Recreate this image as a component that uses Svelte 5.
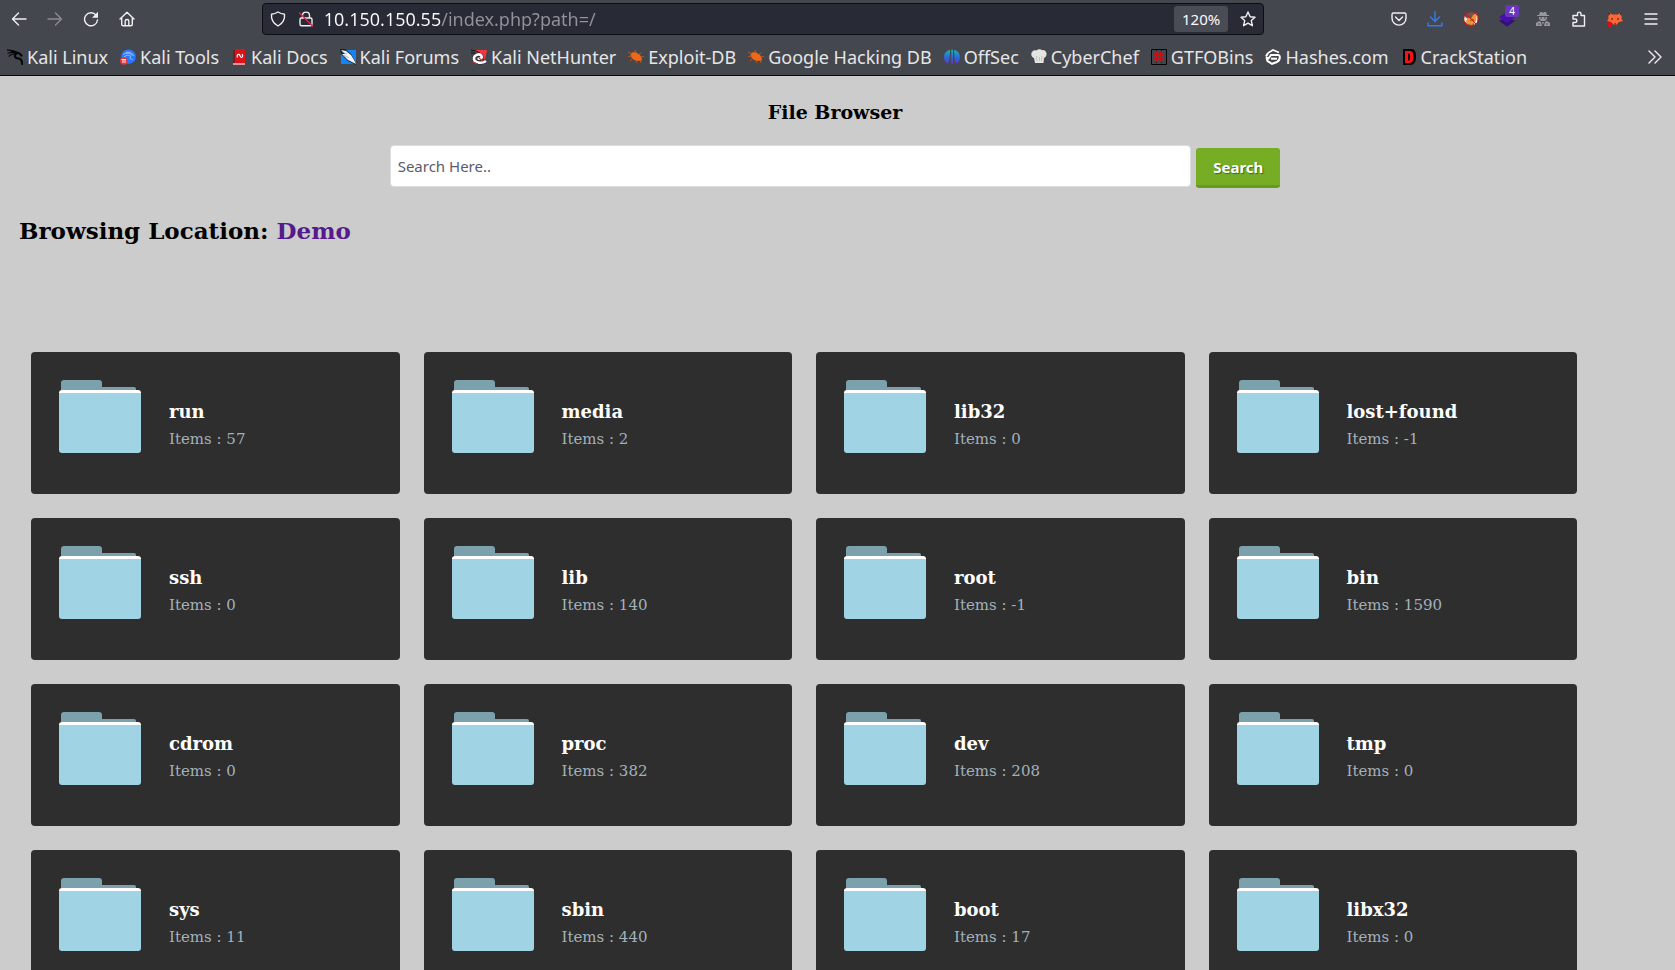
<script>
  const bookmarks = [
    { icon: 'dragon', label: 'Kali Linux' },
    { icon: 'tools', label: 'Kali Tools' },
    { icon: 'docs', label: 'Kali Docs' },
    { icon: 'forums', label: 'Kali Forums' },
    { icon: 'nethunter', label: 'Kali NetHunter' },
    { icon: 'bug', label: 'Exploit-DB' },
    { icon: 'bug', label: 'Google Hacking DB' },
    { icon: 'offsec', label: 'OffSec' },
    { icon: 'chef', label: 'CyberChef' },
    { icon: 'gtfo', label: 'GTFOBins' },
    { icon: 'hashes', label: 'Hashes.com' },
    { icon: 'crack', label: 'CrackStation' }
  ];

  const folders = [
    { name: 'run', items: 57 },
    { name: 'media', items: 2 },
    { name: 'lib32', items: 0 },
    { name: 'lost+found', items: -1 },
    { name: 'ssh', items: 0 },
    { name: 'lib', items: 140 },
    { name: 'root', items: -1 },
    { name: 'bin', items: 1590 },
    { name: 'cdrom', items: 0 },
    { name: 'proc', items: 382 },
    { name: 'dev', items: 208 },
    { name: 'tmp', items: 0 },
    { name: 'sys', items: 11 },
    { name: 'sbin', items: 440 },
    { name: 'boot', items: 17 },
    { name: 'libx32', items: 0 }
  ];

  let url = $state('10.150.150.55/index.php?path=/');
  let query = $state('');
</script>

{#snippet favicon(name)}
  <svg class="favicon" viewBox="0 0 16 16" aria-hidden="true">
    {#if name === 'dragon'}
      <g fill="none" stroke="#050608" stroke-linecap="round">
        <path d="M.5 1.2C4 .8 7 2 9.500 4.200M1 4.200C4 3 7 3.200 9.500 4.400M2 7.200C4 5.200 7 4.600 9.500 5" stroke-width="1.200" />
        <path d="M5 2.200C8 2.500 9.500 4 12.500 4.500L14.500 6.500M9 4.500C6.500 7.500 8.500 9.500 12 9.500C14.500 10 15 12 15.300 15" stroke-width="2.200" />
      </g>
    {:else if name === 'tools'}
      <circle cx="8.500" cy="7.700" r="7.300" fill="#2777ff" />
      <path d="M3 5.500C7 3 10 4.500 12.500 6.500M4 8C7 5.500 9 6 11 7.500C9 8.500 10 10 12.500 10.500M6 3.500C10 2.500 13 5 14 7" fill="none" stroke="#a9caff" stroke-width=".9" />
      <circle cx="3.700" cy="12" r="3.700" fill="#e9363c" />
      <path d="M1.500 10.500H6M3 10.500V14M5 10.500V14" stroke="#fff" stroke-width=".9" />
    {:else if name === 'docs'}
      <path d="M2 1.500L4 0H14V14H2Z" fill="#df1118" />
      <path d="M2 1.500L4 0V14H2Z" fill="#7d1720" />
      <path d="M2 14H14V16H2Z" fill="#dadada" />
      <path d="M2 15H14" stroke="#d11b25" stroke-width=".7" />
      <path d="M6.500 8.500C5.500 6 7 4.800 8.300 5.500C9.500 6.500 9 8.500 10.500 8.500C12 8 11.800 6 11 5" fill="none" stroke="#fff" stroke-width="1.200" />
    {:else if name === 'forums'}
      <path d="M1 1H16V15H1Z" fill="#1683f5" />
      <path d="M0 0H5L11 5L16 14V16L8 12L1 5Z" fill="#17202a" />
      <path d="M1 1L6 2L11 6L14 11L16 15L12 13L8 11L5 8L2 5L5 5Z" fill="#f4f7fb" />
      <path d="M2 3L7 5M4 6L9 9" stroke="#8f99a5" stroke-width=".6" />
    {:else if name === 'nethunter'}
      <path d="M3 1H16L14 11Z" fill="#f33642" />
      <path d="M0 1L5 2L9 4M0 4L4 4" stroke="#111" stroke-width="1" />
      <path d="M15 12C11 15 3.500 14 3 10C2.500 5.500 9 4 10.500 7C11.500 9.500 8 10.500 7 9" fill="none" stroke="#24252a" stroke-width="3.600" />
      <path d="M15 12C11 15 3.500 14 3 10C2.500 5.500 9 4 10.500 7C11.500 9.500 8 10.500 7 9" fill="none" stroke="#fff" stroke-width="2.600" />
      <path d="M2 13L7 15M8 9L12 12" stroke="#d82d3b" stroke-width="1.200" />
    {:else if name === 'bug'}
      <path d="M3 4C6 2 11.500 4.500 13.500 8.500L14 11.500L10 12C6.500 12 3 9 2.500 6.500Z" fill="#f06815" />
      <path d="M4 5L0 3M4 7L0 7.500M5 9L2 12M8 4L7 1M11 6L13 3.500M9 11L8 14M12 11L13 14M13 8L16 7.500" stroke="#b4592a" stroke-width="1" />
    {:else if name === 'offsec'}
      <defs>
        <linearGradient id="offsec-fill" x2="0" y2="1">
          <stop stop-color="#1ab5bd" />
          <stop offset=".55" stop-color="#2868d8" />
          <stop offset="1" stop-color="#6932d2" />
        </linearGradient>
      </defs>
      <path d="M6 1C-1 2-2 12 4 14.500C6 11 6 5 6 1Z M7.300 .8H9V15H7.300Z M10.200 1C17 2 18 12 12 14.500C10 11 10.200 5 10.200 1Z" fill="url(#offsec-fill)" />
    {:else if name === 'chef'}
      <path d="M3 9C0 8-.5 4 1.500 2.500C3 1 5 1.300 5.500 1.500C7 0 10 0 11 1.200C13 .5 16 2.500 15.500 5.500C15.500 7.500 14 8.500 13 9L12.500 14H4Z" fill="#e4e4e1" />
      <path d="M5.500 7L6 12M8.500 8V12M11 7L10.500 12" stroke="#b9b9b7" stroke-width=".8" />
    {:else if name === 'gtfo'}
      <path d="M.5 .5H15.500V15.500H.5Z" fill="#45464c" stroke="#050505" />
      <path d="M5.500 1V15M10.500 1V15" stroke="#111" stroke-dasharray="1 1" />
      <path d="M6 3V13M10 3V13M3 6H13M3 10H13" stroke="#c90d12" stroke-width="2" />
    {:else if name === 'hashes'}
      <path d="M3 4L8 1L14 3.500" fill="none" stroke="#fff" stroke-width="1.600" />
      <path d="M1 7.500L3 4M1 8L3.500 9.500L6 6H12C16 5 15.500 11 12 13L7 14.800L2.500 12L1.500 9" fill="none" stroke="#fff" stroke-width="2" />
      <path d="M6 9.700H12" stroke="#fff" stroke-width="2" />
    {:else if name === 'crack'}
      <path d="M2 0H10C14 0 15 3 15 8C15 13 13 16 9 16H2Z" fill="#050505" />
      <path fill-rule="evenodd" d="M4 2H8.500C11.500 2 12.500 4 12.500 8C12.500 12 11 14 8 14H4ZM7 4.500V11.500H8C9.500 11.500 9.500 4.500 8 4.500Z" fill="#fb1017" />
    {/if}
  </svg>
{/snippet}

<div class="browser">
  <header class="chrome">
    <div class="toolbar">
      <nav class="tools" aria-label="Navigation">
        <button aria-label="Back">
          <svg viewBox="0 0 16 16"><path d="M15 8H1.500M7.500 2L1.500 8L7.500 14" /></svg>
        </button>
        <button class="dim" aria-label="Forward">
          <svg viewBox="0 0 16 16"><path d="M1 8H14.500M8.500 2L14.500 8L8.500 14" /></svg>
        </button>
        <button aria-label="Reload">
          <svg viewBox="0 0 16 16"><path d="M13.200 4.300A6.500 6.500 0 1 0 14.500 9" /><path class="solid" d="M15 .8V6.700H9Z" /></svg>
        </button>
        <button aria-label="Home">
          <svg viewBox="0 0 16 16"><path d="M1 8L8 1.200L15 8M2.700 7V13.300Q2.700 14.800 4.200 14.800H11.800Q13.300 14.800 13.300 13.300V7M6.200 14.500V10Q6.200 8.500 8 8.500T9.800 10V14.500" /></svg>
        </button>
      </nav>

      <div class="address">
        <svg viewBox="0 0 16 16" aria-hidden="true"><path d="M8 1C10 2.300 12 3 14.500 3.200C15 8.500 12.500 12.500 8 15C3.500 12.500 1 8.500 1.500 3.200C4 3 6 2.300 8 1Z" /></svg>
        <svg class="lock" viewBox="0 0 16 16" aria-hidden="true">
          <path d="M4.500 7V4.500C4.500 0 11.500 0 11.500 4.500V7M3.500 7H12.500Q14 7 14 8.500V13Q14 14.800 12.500 14.800H3.500Q2 14.800 2 13V8.500Q2 7 3.500 7Z" />
          <path class="slash" d="M1.500 2L14.500 15" />
        </svg>
        <input aria-label="Address" bind:value={url} spellcheck="false" />
        <button class="zoom">120%</button>
        <button class="star" aria-label="Bookmark this page">
          <svg viewBox="0 0 16 16"><path d="M8 1L10.100 5.700L15 6.200L11.300 9.600L12.400 14.700L8 12.100L3.600 14.700L4.700 9.600L1 6.200L5.900 5.700Z" /></svg>
        </button>
      </div>

      <div class="tools">
        <button aria-label="Save to Pocket">
          <svg viewBox="0 0 16 16"><path d="M2.500 2H13.500Q15 2 15 3.500V7C15 16.500 1 16.500 1 7V3.500Q1 2 2.500 2ZM4.500 6L8 9.500L11.500 6" /></svg>
        </button>
        <button class="blue" aria-label="Downloads">
          <svg viewBox="0 0 16 16"><path d="M8 .5V10.500M3.500 6L8 10.500L12.500 6M1 12V14.800H15V12" /></svg>
        </button>
        <button aria-label="Proxy switcher">
          <svg class="art" viewBox="0 0 16 16">
            <circle cx="8" cy="8" r="7.200" fill="#655957" />
            <path d="M1 5L5 8L4 12L1 10ZM12 2L15 5L14 12L11 14Z" fill="#f0ede6" />
            <path d="M3 10L6 6L8 8L10 4L14 2.500L13 10L9 14L4 13Z" fill="#f4932b" />
            <path d="M7 10L10 8L11 10" fill="none" stroke="#a6501b" />
            <circle cx="8" cy="8" r="7.300" fill="none" stroke="#be151d" />
            <path d="M3 3L13 13" stroke="#be151d" />
          </svg>
        </button>
        <button aria-label="Wappalyzer">
          <svg class="art" viewBox="0 0 16 16">
            <path d="M0 10L8 6L16 10L8 15.500Z" fill="#321078" />
            <path d="M0 6L8 1L16 6L8 12Z" fill="#4710ad" />
          </svg>
          <span class="badge">4</span>
        </button>
        <button aria-label="User agent">
          <svg class="art" viewBox="0 0 16 16">
            <path d="M5 1H7L8 2L9 1H11L12 4H14V5H2V4H4ZM4 6H12V8L10 10H6L4 8ZM1 12L4 10L6 11L7 15H1ZM15 12L12 10L10 11L9 15H15ZM7 11H9L8 14Z" fill="#96979a" />
            <path d="M5 7H7M9 7H11M3 13H5M11 13H13" stroke="#4b4c52" />
          </svg>
        </button>
        <button aria-label="Extensions">
          <svg viewBox="0 0 16 16"><path d="M2 6V4.500H6.500V3C6.500 .5 10 .5 10 3V4.500H13.500V15H2V11.500H4C6.500 11.500 6.500 8 4 8H2Z" /></svg>
        </button>
        <button aria-label="FoxyProxy">
          <svg class="art" viewBox="0 0 16 16">
            <path d="M1 0L5 3.500H11L15 0L14.500 8L16 10L12 11L9 14H7L4 11L0 10L1.500 8Z" fill="#ff6637" />
            <path d="M1 0L1.500 5L3.500 2.500ZM15 0L14.500 5L12.500 2.500Z" fill="#33282a" />
            <path d="M5 7V9M11 7V9M7 13H9" stroke="#281d1d" />
            <circle cx="2.700" cy="13.500" r="2.500" fill="#ef050b" />
          </svg>
        </button>
        <button aria-label="Menu">
          <svg viewBox="0 0 16 16"><path d="M2 3H14M2 8H14M2 13H14" /></svg>
        </button>
      </div>
    </div>

    <nav class="bookmarks" aria-label="Bookmarks">
      {#each bookmarks as mark}
        <a href="#{mark.icon}">{@render favicon(mark.icon)}<span>{mark.label}</span></a>
      {/each}
      <button class="more" aria-label="More bookmarks">
        <svg viewBox="0 0 16 16"><path d="M2 2L8 8L2 14M8 2L14 8L8 14" /></svg>
      </button>
    </nav>
  </header>

  <main>
    <h3>File Browser</h3>
    <form onsubmit={(event) => event.preventDefault()}>
      <input class="query" type="text" aria-label="Search Here.." placeholder="Search Here.." bind:value={query} />
      <button class="submit">Search</button>
    </form>
    <h2>Browsing Location: <a href="#demo">Demo</a></h2>

    <section class="grid">
      {#each folders as folder}
        <article class="card">
          <div class="folder" aria-hidden="true">
            <div class="tabs"><div class="tab"></div><div class="ledge"></div></div>
            <div class="front"></div>
          </div>
          <div class="info">
            <h4>{folder.name}</h4>
            <p>Items : {folder.items}</p>
          </div>
        </article>
      {/each}
    </section>
  </main>
</div>

<style>
  :global(body) {
    margin: 0;
    background: #ccc;
  }

  .browser {
    --ui: 'Noto Sans', 'Open Sans', sans-serif;
    height: 100vh;
    overflow: hidden;
    font-family: 'DejaVu Serif', serif;
  }

  button {
    border: 0;
    padding: 0;
    background: none;
    font-family: var(--ui);
  }

  .chrome {
    background: #45474f;
    border-bottom: 1px solid #0c0612;
    color: #e6e6e6;
    font-family: var(--ui);
  }

  .chrome svg {
    display: block;
    flex: none;
    width: 16px;
    height: 16px;
    fill: none;
    stroke: #f0f0f2;
    stroke-width: 1.400;
    stroke-linecap: round;
    stroke-linejoin: round;
  }

  .chrome svg.art,
  .chrome svg.favicon {
    stroke: none;
    stroke-width: 1;
    stroke-linecap: butt;
    stroke-linejoin: miter;
  }

  .chrome svg .solid {
    fill: #f0f0f2;
    stroke: none;
  }

  .toolbar {
    display: flex;
    align-items: center;
    height: 38px;
    padding: 0 6px 0 1px;
  }

  .tools {
    display: flex;
  }

  .tools button {
    position: relative;
    display: grid;
    place-items: center;
    width: 36px;
    height: 36px;
  }

  .dim {
    opacity: .4;
  }

  .chrome .blue svg {
    stroke: #2f7cf0;
  }

  .badge {
    position: absolute;
    top: 4px;
    left: 16px;
    width: 14px;
    height: 12px;
    border-radius: 2px;
    background: #6a36bd;
    color: #fff;
    font-size: 10px;
    line-height: 12px;
    text-align: center;
  }

  .address {
    display: flex;
    flex: 1;
    align-items: center;
    box-sizing: border-box;
    height: 32px;
    margin: 0 7%;
    padding: 0 7px;
    border: 1px solid #0d0e13;
    border-radius: 4px;
    background: #282a36;
  }

  .address .lock {
    margin: 0 10px 0 12px;
  }

  .chrome .lock .slash {
    stroke: #e5204b;
  }

  .address input {
    flex: 1;
    min-width: 0;
    padding: 0;
    border: 0;
    outline: 0;
    background: linear-gradient(90deg, #fbfbfe 117px, #92939a 117px);
    background-clip: text;
    color: #fbfbfe;
    font: 18px/28px var(--ui);
    -webkit-text-fill-color: transparent;
  }

  .zoom {
    height: 26px;
    padding: 0 8px;
    border-radius: 3px;
    background: #494b55;
    color: #fbfbfe;
    font-size: 15px;
  }

  .star {
    margin-left: 12px;
  }

  .bookmarks {
    display: flex;
    align-items: center;
    gap: 12px;
    height: 37px;
    padding: 0 12px 0 7px;
    font-size: 18px;
    line-height: 24px;
    white-space: nowrap;
  }

  .bookmarks a {
    display: flex;
    align-items: center;
    gap: 4px;
    color: inherit;
    text-decoration: none;
  }

  .more {
    margin-left: auto;
  }

  main {
    padding-top: 24px;
  }

  h2,
  h3,
  h4,
  p {
    margin: 0;
  }

  h3 {
    padding-right: 5px;
    font-size: 19px;
    line-height: 24px;
    text-align: center;
  }

  form {
    display: flex;
    justify-content: center;
    align-items: flex-start;
    gap: 5px;
    padding: 21px 5px 0 0;
  }

  .query {
    box-sizing: border-box;
    width: 48%;
    height: 42px;
    padding: 0 7px;
    border: 1px solid #ddd;
    border-radius: 4px;
    background: #fff;
    font: 15px/24px var(--ui);
  }

  .query::placeholder {
    color: #5b5b69;
    opacity: 1;
  }

  .submit {
    height: 40px;
    margin-top: 3px;
    padding: 0 17px;
    border-bottom: 3px solid #659a20;
    border-radius: 3px;
    background: #77ad25;
    color: #fff;
    font-size: 15px;
    font-weight: 700;
    line-height: 34px;
    text-shadow: 1px 1px 1px #3d6a0a;
  }

  h2 {
    padding: 27px 19px 0;
    font-size: 23px;
    line-height: 32px;
  }

  h2 a {
    color: #551a8b;
    text-decoration: none;
  }

  .grid {
    display: grid;
    grid-template-columns: repeat(4, 1fr);
    gap: 24px;
    padding: 105px 98px 24px 31px;
  }

  .card {
    display: flex;
    align-items: flex-start;
    gap: 28px;
    box-sizing: border-box;
    height: 142px;
    padding: 28px;
    border-radius: 4px;
    background: #2e2e2e;
  }

  .folder {
    flex: none;
    width: 82px;
  }

  .tabs {
    display: flex;
    align-items: flex-end;
    padding-left: 2px;
  }

  .tab {
    width: 41px;
    height: 10px;
    border-radius: 3px 3px 0 0;
    background: #7ba1ad;
  }

  .ledge {
    width: 34px;
    height: 3px;
    border-radius: 0 2px 0 0;
    background: #7ba1ad;
  }

  .front {
    height: 60px;
    border-top: 3px solid #fff;
    border-radius: 3px;
    background: #a0d4e4;
  }

  .info {
    padding-top: 18px;
  }

  h4 {
    color: #fff;
    font-size: 18px;
    line-height: 28px;
  }

  p {
    color: #a4b1ba;
    font-size: 15px;
    line-height: 26px;
  }
</style>
